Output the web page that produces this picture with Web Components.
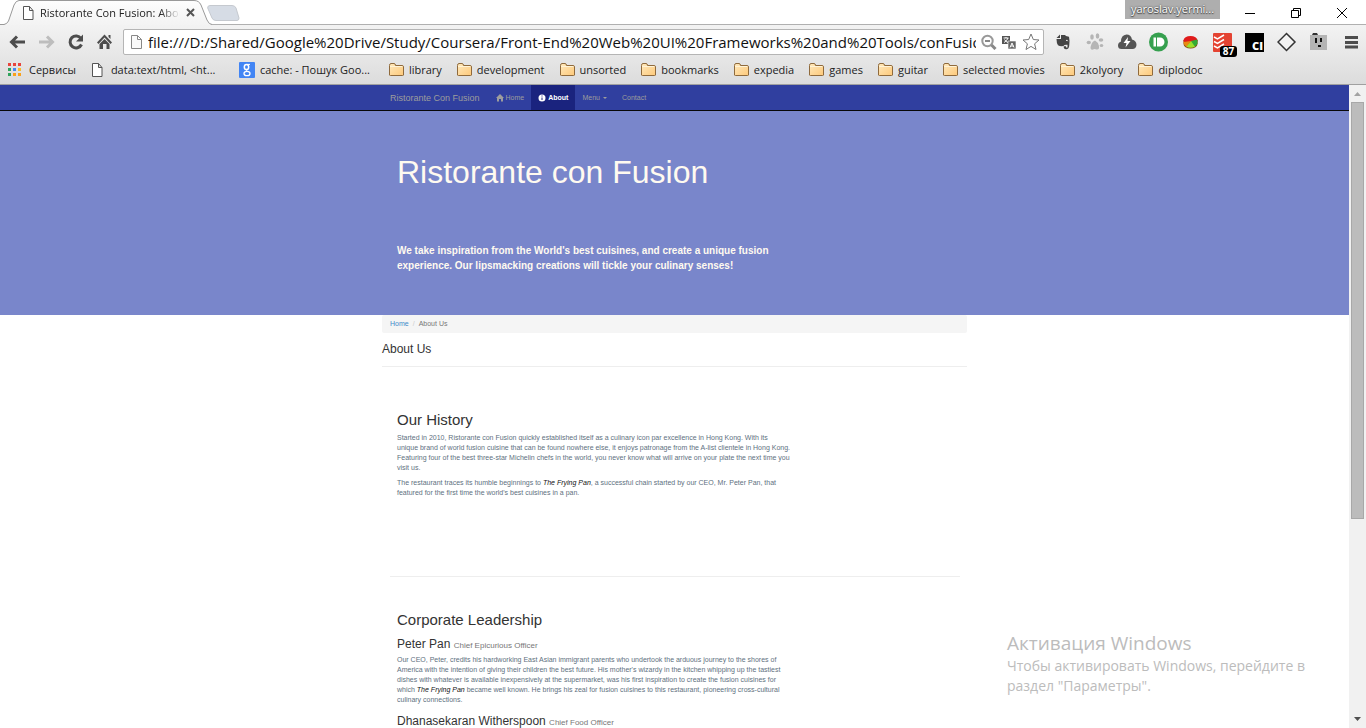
<!DOCTYPE html>
<html lang="uk">
<head>
<meta charset="utf-8">
<title>Ristorante Con Fusion: About Us</title>
<style>
html,body{height:100%;margin:0}
body{background:#fff;overflow:hidden}
</style>
</head>
<body>
<browser-window>
  <tab-strip slot="tabs"></tab-strip>
  <tool-bar slot="toolbar"></tool-bar>
  <bookmarks-bar slot="bookmarks"></bookmarks-bar>
  <about-page></about-page>
  <page-scrollbar slot="scroll"></page-scrollbar>
  <activation-note slot="note"></activation-note>
</browser-window>
<script>
const define = (name, html) => customElements.define(name, class extends HTMLElement {
  constructor() {
    super();
    this.attachShadow({ mode: 'open' }).innerHTML = typeof html === 'function' ? html(this) : html;
  }
});

/* ---------- window frame ---------- */
define('browser-window', `
<style>
:host{display:flex;flex-direction:column;height:100vh;position:relative;font:11px/16px "Open Sans","Noto Sans",sans-serif;color:#222}
.chrome{flex:none;background:linear-gradient(#fff,#fff 24px,#f3f3f3 24px,#dcdcdc);border-bottom:1px solid #a0a0a0}
.view{flex:1;display:flex;min-height:0}
main{flex:1;min-width:0;overflow:hidden}
.note{position:absolute;right:32px;bottom:32px}
</style>
<div class="chrome"><slot name="tabs"></slot><slot name="toolbar"></slot><slot name="bookmarks"></slot></div>
<div class="view"><main><slot></slot></main><slot name="scroll"></slot></div>
<div class="note"><slot name="note"></slot></div>`);

/* ---------- tab strip ---------- */
define('tab-strip', `
<style>
:host{display:flex;height:25px;position:relative;background:#fff;box-shadow:inset 0 -1px #b0b0b0}
button{border:0;background:none;padding:0;display:block}
svg{display:block}
.tab{position:relative;width:212px;height:25px;flex:none}
.tab>svg{position:absolute;inset:0}
.in{position:relative;display:flex;align-items:center;height:25px;padding-left:22px;gap:5px}
.title{width:140px;overflow:hidden;white-space:nowrap;-webkit-mask-image:linear-gradient(90deg,#000 120px,transparent)}
.in button{margin-left:1px}
.new{margin:5px 0 0 -5px;height:16px}
.user{margin-left:auto;width:95px;height:19px;background:#aeaeae;color:#fff;text-align:center;line-height:18px;text-shadow:0 0 2px #333,0 1px 1px #444}
.win{display:flex;align-items:center;margin-left:24px;margin-right:18px;gap:34px;height:26px}
</style>
<div class="tab">
<svg width="212" height="25"><defs><linearGradient id="g" x2="0" y2="1"><stop stop-color="#fdfdfd"/><stop offset="1" stop-color="#f3f3f3"/></linearGradient></defs><path d="M0 24.500 H4 Q7 24 8.500 21 L14 5 Q16 .5 19 .5 H194 Q199 .5 201 5 L207 20 Q209 24.500 212 24.500 V25 H0Z" fill="url(#g)"/><path d="M0 24.500 H4 Q7 24 8.500 21 L14 5 Q16 .5 19 .5 H194 Q199 .5 201 5 L207 20 Q209 24.500 212 24.500" fill="none" stroke="#999"/></svg>
<div class="in"><svg width="13" height="14"><path d="M1.500.5h6l3.500 4v9h-9.500zM7.500.5v4h3.500" fill="#fff" stroke="#555"/></svg><span class="title">Ristorante Con Fusion: About Us</span>
<button aria-label="Close tab"><svg width="9" height="9"><path d="M1 1l7 7M8 1l-7 7" stroke="#555" stroke-width="2"/></svg></button></div></div>
<button class="new" aria-label="New tab"><svg width="33" height="16"><path d="M3 .5H25Q28 .5 29 3L32 13Q32 15.500 30 15.500H9Q6 15.500 5 13L.7 3Q.5.5 3 .5Z" fill="#d6dce5" stroke="#c5c9cf"/></svg></button>
<span class="user">yaroslav.yermi...</span>
<div class="win">
<button aria-label="Minimize"><svg width="12" height="12"><path d="M1 6.500h10" stroke="#000"/></svg></button>
<button aria-label="Restore"><svg width="12" height="12"><path d="M1.500 3.500h7v7h-7zM3.500 3.500v-2h7v7h-2" fill="none" stroke="#000"/></svg></button>
<button aria-label="Close"><svg width="12" height="12"><path d="M1 1l10 10M11 1L1 11" stroke="#000"/></svg></button>
</div>`);

/* ---------- toolbar ---------- */
define('tool-bar', `
<style>
:host{display:flex;align-items:center;height:34px;padding:0 8px;gap:8px}
button{border:0;background:none;padding:0;display:block;flex:none;position:relative}
svg{display:block}
.nav{display:flex;gap:9px;width:107px}
.url{flex:1;min-width:0;display:flex;align-items:center;height:26px;box-sizing:border-box;border:1px solid #b5b5b5;border-radius:2px;background:#fff;padding:0 3px 0 6px;gap:5px}
input{flex:1;min-width:0;border:0;padding:0;outline:0;background:none;font:15px/22px "Open Sans","Noto Sans",sans-serif;color:#111;height:22px}
.ext{display:flex;gap:12px;padding-left:1px}
b{position:absolute;left:7px;top:14px;width:17px;height:11px;border-radius:3px;background:#000;color:#fff;font:bold 10px/11px "Open Sans",sans-serif}
.menu{margin-left:8px}
</style>
<div class="nav">
<button aria-label="Back"><svg width="20" height="20"><path d="M17 10H4M9 4.500L3.500 10L9 15.500" fill="none" stroke="#4d4d4d" stroke-width="3"/></svg></button>
<button aria-label="Forward"><svg width="20" height="20"><path d="M2 10H15M10 4.500L15.500 10L10 15.500" fill="none" stroke="#bdbdbd" stroke-width="3"/></svg></button>
<button aria-label="Reload"><svg width="20" height="20"><path d="M15 6.500A6 6 0 1 0 15.500 12.500" fill="none" stroke="#4d4d4d" stroke-width="3"/><path d="M17 2.500V9.500H10Z" fill="#4d4d4d"/></svg></button>
<button aria-label="Home"><svg width="20" height="20"><path d="M9.500 2.500L17 10.500L15.500 12L9.500 5.500L3.500 12L2 10.500ZM13.500 3h2v4l-2-2zM4.500 12L9.500 7L14.500 12V17H11.500V12H8V17H4.500Z" fill="#4d4d4d"/></svg></button>
</div>
<div class="url"><svg width="13" height="16"><path d="M1.500 1.500h6l4 4v9h-10zM7.500 1.500v4h4" fill="#fafafa" stroke="#888"/></svg>
<input aria-label="Address" value="file:///D:/Shared/Google%20Drive/Study/Coursera/Front-End%20Web%20UI%20Frameworks%20and%20Tools/conFusion/aboutus.html">
<button aria-label="Zoom"><svg width="16" height="16"><circle cx="6.500" cy="7" r="5.200" fill="none" stroke="#999" stroke-width="2"/><path d="M4 7h5" stroke="#888" stroke-width="2"/><path d="M10.500 11l4 4" stroke="#888" stroke-width="3"/></svg></button>
<button aria-label="Translate"><svg width="15" height="15"><path d="M0 1h8v8H0z" fill="#555"/><path d="M1.500 3h5M4 2v1M6 3Q5 6 2 7.500M2.500 4.500Q4 7 6 7.500" stroke="#fff" fill="none"/><path d="M6 6h8v8H6z" fill="#666" stroke="#fff" stroke-width=".6"/><path d="M8 12.500L10 8L12 12.500M9 11h2.500" stroke="#fff" fill="none"/></svg></button>
<button aria-label="Bookmark"><svg width="18" height="18"><path d="M9 1L11.300 6.500L17 7L12.600 10.800L14 16.500L9 13.400L4 16.500L5.400 10.800L1 7L6.700 6.500Z" fill="#fff" stroke="#777"/></svg></button></div>
<div class="ext">
<button aria-label="Evernote"><svg width="20" height="20"><path d="M3.500 6L7 2.500V6ZM8 3h4l1 1 3 .7Q17 9 16.200 14Q15.500 17.500 13 17.200Q10.500 17 10.700 14.200H13v1.200h1.500V12.800Q11 12.500 10.500 14Q7 14.500 5 13.200Q3.500 11 3.500 7H8Z" fill="#444"/><path d="M13 8.500q1.500-.8 1.800.7" stroke="#eee" fill="none"/></svg></button>
<button aria-label="Paw"><svg width="20" height="20" fill="#b5b5b5"><path d="M10 8.500Q13 10 14 14Q14.500 18 11.500 17.500Q9.500 16.500 7.500 17.800Q4.500 17.500 6 13.500Q7 9.500 10 8.500Z"/><ellipse cx="7" cy="5" rx="1.800" ry="2.700"/><ellipse cx="12.500" cy="4" rx="1.800" ry="2.700"/><ellipse cx="3.800" cy="10.500" rx="2.200" ry="1.800"/><ellipse cx="16" cy="8" rx="2.300" ry="1.700"/><ellipse cx="16.500" cy="13.500" rx="1.800" ry="1.500"/></svg></button>
<button aria-label="Cloud"><svg width="20" height="20"><path d="M4.500 17Q1 17 1 13.500Q1 10.500 4 9.500Q4 3 9.500 2.500Q14 2.500 15 7.500Q19.500 8.500 19.500 13Q19 17 15.500 17Z" fill="#555"/><path d="M11 5L6.500 11H9.500L8.500 15.500L13.500 9H10.500Z" fill="#fff"/></svg></button>
<button aria-label="Pushbullet"><svg width="20" height="20"><circle cx="9.500" cy="10" r="9.500" fill="#36a04f"/><path d="M4.500 5.500h2.500v9H4.500zM8 5.500h3a4.500 4.500 0 0 1 0 9H8z" fill="#fff"/></svg></button>
<button aria-label="Chart"><svg width="20" height="20"><path d="M2.500 8V12A7 4.500 0 0 0 16.500 12V8Z" fill="#8a4a10"/><ellipse cx="9.500" cy="8.500" rx="7" ry="4.500" fill="#e01b1b"/><path d="M10 9L16.500 7.500V11.500Q15 15 11 15.500Z" fill="#3a3"/><path d="M10 9L14 14.800Q9 17 5 14.500Z" fill="#9be02a"/><path d="M10 9L5.500 14.500Q2.500 13 2.500 10Z" fill="#e88a10"/></svg></button>
<button aria-label="Todoist"><svg width="20" height="20"><rect width="19" height="19" y="1" rx="1" fill="#e44332"/><path d="M1 5l3.500 2L11 3M1 9.500l3.500 2L11 7.500M1 14l3.500 2L11 12" fill="none" stroke="#fff" stroke-width="1.500"/></svg><b>87</b></button>
<button aria-label="CI"><svg width="20" height="20"><path d="M0 1h19v19H0z" fill="#000"/><text x="7" y="18" fill="#fff" font-family="Open Sans" font-weight="800" font-size="11">CI</text></svg></button>
<button aria-label="Diamond"><svg width="20" height="20"><path d="M9.500 1.500L18 10L9.500 18.500L1 10Z" fill="#f3f3f3" stroke="#333" stroke-width="1.500"/></svg></button>
<button aria-label="Face"><svg width="20" height="20"><path d="M1 3h17v15H1z" fill="#b4b4b4"/><path d="M3 3l1-2h4l1 2z" fill="#333"/><path d="M6 6h2v5H6zM11 6h2v4h-2zM9 13h3v2H9z" fill="#111"/></svg></button>
</div>
<button class="menu" aria-label="Menu"><svg width="13" height="14"><path d="M0 2.500h13M0 7.500h13M0 12h13" stroke="#4d4d4d" stroke-width="3"/></svg></button>`);

/* ---------- bookmarks ---------- */
const marks = {
  apps: '<path d="M0 1h3v3H0zM5 1h3v3H5zM10 1h3v3h-3z" fill="#e8453c"/><path d="M0 6h3v3H0z" fill="#2fa35b"/><path d="M5 6h3v3H5z" fill="#4688f1"/><path d="M10 6h3v3h-3z" fill="#f9bb2d"/><path d="M0 11h3v3H0z" fill="#2fa35b"/><path d="M5 11h3v3H5zM10 11h3v3h-3z" fill="#f9a11b"/>',
  page: '<path d="M2.500 1.500h6l3.500 4v9h-9.500zM8.500 1.500v4H12" fill="#fff" stroke="#555"/>',
  google: '<rect width="16" height="16" rx="1" fill="#4285f4"/><g fill="none" stroke="#fff"><ellipse cx="7.500" cy="5" rx="2.200" ry="2.600" stroke-width="1.500"/><path d="M8 2.400h3M8 7.500Q6 8.500 8 9.300"/><ellipse cx="8" cy="11.500" rx="3" ry="2.200" stroke-width="1.300"/></g>',
  folder: '<defs><linearGradient id="f" x2="1" y2="1"><stop stop-color="#ffe9bd"/><stop offset="1" stop-color="#fdc97a"/></linearGradient></defs><path d="M1.500 13V3.500Q1.500 1.500 3 1.500H6Q7.500 1.500 7.500 3.500H14Q15.500 3.500 15.500 5V13Q15.500 13.500 14.500 13.500H2.500Q1.500 13.500 1.500 13Z" fill="url(#f)" stroke="#8f6a3c"/><path d="M2 4.500h12.500" stroke="#fff3d6"/>'
};
define('book-mark', el => `
<style>
:host{display:block;flex:none}
:host([wide]){width:135px}
a{display:flex;align-items:center;gap:5px;color:#222;text-decoration:none;white-space:nowrap}
svg{display:block;flex:none}
</style>
<a href="#"><svg width="16" height="16">${marks[el.getAttribute('icon')]}</svg><slot></slot></a>`);
define('bookmarks-bar', `
<style>
:host{display:flex;align-items:center;height:21px;padding:0 8px 4px;gap:14px}
</style>
<book-mark icon="apps">Сервисы</book-mark><book-mark icon="page" wide>data:text/html, &lt;ht...</book-mark><book-mark icon="google" wide>cache: - Пошук Goo...</book-mark>
${['library','development','unsorted','bookmarks','expedia','games','guitar','selected movies','2kolyory','diplodoc'].map(t => `<book-mark icon="folder">${t}</book-mark>`).join('')}`);

/* ---------- web page ---------- */
define('site-nav', `
<style>
:host{display:block;background:#303f9f;border-bottom:1px solid #080808;font-size:7px;line-height:10px}
nav{display:flex;width:585px;margin:0 auto;height:25px;align-items:stretch}
a{display:flex;align-items:center;padding:0 7px;color:#9d9d9d;text-decoration:none;gap:2px}
.brand{font-size:9px;padding:0 9px 0 8px}
.on{background:#1a237e;color:#fff;font-weight:bold}
</style>
<nav><a class="brand" href="#">Ristorante Con Fusion</a>
<a href="#"><svg width="8" height="8"><path d="M4 0L8 4H7V7.500H5V5H3V7.500H1V4H0Z" fill="#9d9d9d"/></svg>Home</a>
<a class="on" href="#"><svg width="8" height="8"><circle cx="4" cy="4" r="3.500" fill="#fff"/><path d="M4 3.500v2.500M4 1.500v1" stroke="#1a237e"/></svg>About</a>
<a href="#">Menu <svg width="6" height="4"><path d="M1 1h4L3 3z" fill="#9d9d9d"/></svg></a>
<a href="#">Contact</a></nav>`);
define('hero-banner', `
<style>
:host{display:block;background:#7986cb;color:#fffaf0}
div{width:585px;margin:0 auto;padding:40px 15px 42px;box-sizing:border-box}
h1{margin:0 0 50px;font-weight:400;font-size:32px;line-height:42px}
p{margin:0;width:380px;font-weight:700;font-size:10px;line-height:15px}
</style>
<div><h1>Ristorante con Fusion</h1><p>We take inspiration from the World's best cuisines, and create a unique fusion experience. Our lipsmacking creations will tickle your culinary senses!</p></div>`);
define('text-section', `
<style>
:host{display:block;padding:0 8px 0 15px}
h2{margin:0 0 5px;font-weight:400;font-size:15px;line-height:16px;color:#333}
</style>
<h2><slot name="heading"></slot></h2><slot></slot>`);
define('staff-name', `
<style>
:host{display:block;font-size:12px;line-height:13px;color:#333;padding:5px 0 3px}
h3{margin:0;font:inherit}
small{font-size:8px;color:#777}
</style>
<h3><slot></slot> <small><slot name="role"></slot></small></h3>`);
define('about-page', `
<style>
:host{display:block;font:7px/10px "Liberation Sans",Arial,sans-serif;color:#607080}
.wrap{width:585px;margin:0 auto}
.crumbs{display:flex;gap:4px;background:#f5f5f5;border-radius:2px;padding:4px 8px;color:#777;height:10px}
.crumbs a{color:#428bca;text-decoration:none}
.crumbs i{color:#ccc;font-style:normal}
h2{margin:9px 0 0;padding-bottom:10px;border-bottom:1px solid #eee;font-weight:400;font-size:12px;line-height:14px;color:#333}
text-section{margin-top:45px}
hr{border:0;border-top:1px solid #eee;margin:78px 7px 0 8px}
hr+text-section{margin-top:35px}
p{margin:0 0 5px;width:416px}
em{color:#111}
</style>
<site-nav></site-nav><hero-banner></hero-banner>
<div class="wrap">
<div class="crumbs"><a href="#">Home</a><i>/</i><span>About Us</span></div>
<h2>About Us</h2>
<text-section><span slot="heading">Our History</span>
<p>Started in 2010, Ristorante con Fusion quickly established itself as a culinary icon par excellence in Hong Kong. With its<br>unique brand of world fusion cuisine that can be found nowhere else, it enjoys patronage from the A-list clientele in Hong Kong.<br>Featuring four of the best three-star Michelin chefs in the world, you never know what will arrive on your plate the next time you<br>visit us.</p>
<p>The restaurant traces its humble beginnings to <em>The Frying Pan</em>, a successful chain started by our CEO, Mr. Peter Pan, that<br>featured for the first time the world's best cuisines in a pan.</p></text-section>
<hr>
<text-section><span slot="heading">Corporate Leadership</span>
<staff-name>Peter Pan<span slot="role">Chief Epicurious Officer</span></staff-name>
<p>Our CEO, Peter, credits his hardworking East Asian immigrant parents who undertook the arduous journey to the shores of<br>America with the intention of giving their children the best future. His mother's wizardy in the kitchen whipping up the tastiest<br>dishes with whatever is available inexpensively at the supermarket, was his first inspiration to create the fusion cuisines for<br>which <em>The Frying Pan</em> became well known. He brings his zeal for fusion cuisines to this restaurant, pioneering cross-cultural<br>culinary connections.</p>
<staff-name>Dhanasekaran Witherspoon<span slot="role">Chief Food Officer</span></staff-name></text-section>
</div>`);

/* ---------- scrollbar and system note ---------- */
define('page-scrollbar', `
<style>
:host{display:flex;flex-direction:column;width:17px;flex:none;background:#f1f1f1}
svg{display:block;flex:none}
.track{flex:1;padding:0 2px}
.thumb{height:calc(100% * 13 / 19);box-sizing:border-box;background:#bcbcbc;border:1px solid #a8a8a8}
</style>
<svg width="17" height="17"><path d="M5 11h7L8.500 7z" fill="#a3a3a3"/></svg><div class="track"><div class="thumb"></div></div><svg width="17" height="17"><path d="M5 6h7L8.500 10z" fill="#505050"/></svg>`);
define('activation-note', `
<style>
:host{display:block;width:327px;color:#bcbcbc;font:14px/20px "Open Sans","Noto Sans",sans-serif}
h2{margin:0;font-weight:400;font-size:19px;line-height:25px}
p{margin:0}
</style>
<h2>Активация Windows</h2><p>Чтобы активировать Windows, перейдите в раздел "Параметры".</p>`);
</script>
</body>
</html>
